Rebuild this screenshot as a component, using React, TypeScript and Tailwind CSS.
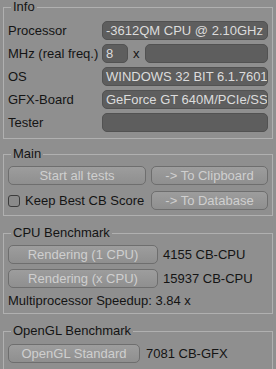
import React from 'react';

const font = { fontFamily: '"Liberation Sans", Arial, sans-serif' };

function Group({ title, className, children }: { title: string; className?: string; children: React.ReactNode }) {
  return (
    <fieldset className={`min-w-0 w-[270px] border border-[#b0b0b0] px-[4px] ${className ?? ''}`}>
      <legend className="ml-[3px] px-[2px] text-[13px] leading-[14px] text-[#141414]">{title}</legend>
      {children}
    </fieldset>
  );
}

function Field({ value, className }: { value?: string; className?: string }) {
  return (
    <div
      className={`min-w-0 h-[19px] rounded-[5px] border border-[#525252] bg-[#5e5e5e] px-[3px] text-[13px] leading-[17px] text-[#dcdcdc] whitespace-nowrap overflow-hidden ${className ?? ''}`}
    >
      {value}
    </div>
  );
}

function Btn({ label, className }: { label: string; className?: string }) {
  return (
    <button
      className={`h-[19px] rounded-[5px] border border-[#6e6e6e] bg-gradient-to-b from-[#9d9d9d] to-[#8f8f8f] text-[13px] leading-[17px] text-[#cfcfcf] text-center whitespace-nowrap ${className ?? ''}`}
    >
      {label}
    </button>
  );
}

const rows: [string, string][] = [
  ['Processor', '-3612QM CPU @ 2.10GHz'],
  ['MHz (real freq.)', ''],
  ['OS', 'WINDOWS 32 BIT 6.1.7601'],
  ['GFX-Board', 'GeForce GT 640M/PCIe/SSE2'],
  ['Tester', ''],
];

export default function App() {
  return (
    <div className="w-[276px] h-[369px] bg-[#8f8f8f] overflow-hidden px-[3px] text-[#141414]" style={font}>
      <Group title="Info" className="pt-[7px] pb-[6px]">
        <div className="flex flex-col gap-[4px]">
          {rows.map(([label, value]) => (
            <div key={label} className="flex items-center h-[19px] min-w-0">
              <span className="w-[94px] shrink-0 text-[13px] whitespace-nowrap">{label}</span>
              {label === 'MHz (real freq.)' ? (
                <div className="flex items-center flex-1 min-w-0">
                  <Field value="8" className="w-[26px] shrink-0" />
                  <span className="w-[17px] shrink-0 pl-[5px] text-[13px]">x</span>
                  <Field className="flex-1" />
                </div>
              ) : (
                <Field value={value} className="flex-1" />
              )}
            </div>
          ))}
        </div>
      </Group>

      <Group title="Main" className="mt-[8px] pt-[5px] pb-[5px]">
        <div className="grid grid-cols-[138px_1fr] gap-x-[5px] gap-y-[6px]">
          <Btn label="Start all tests" />
          <Btn label="-> To Clipboard" />
          <div className="flex items-center gap-[5px] h-[19px]">
            <span className="w-[12px] h-[12px] rounded-[3px] border border-[#3c3c3c] bg-[#8a8a8a]" />
            <span className="text-[13px] whitespace-nowrap">Keep Best CB Score</span>
          </div>
          <Btn label="-> To Database" />
        </div>
      </Group>

      <Group title="CPU Benchmark" className="mt-[10px] pt-[5px] pb-[4px]">
        <div className="flex flex-col gap-[4px]">
          <div className="flex items-center gap-[5px]">
            <Btn label="Rendering (1 CPU)" className="w-[150px]" />
            <span className="text-[13px]">4155 CB-CPU</span>
          </div>
          <div className="flex items-center gap-[5px]">
            <Btn label="Rendering (x CPU)" className="w-[150px]" />
            <span className="text-[13px]">15937 CB-CPU</span>
          </div>
          <div className="h-[17px] text-[13px] leading-[17px]">Multiprocessor Speedup: 3.84 x</div>
        </div>
      </Group>

      <Group title="OpenGL Benchmark" className="mt-[10px] pt-[6px] pb-[5px]">
        <div className="flex items-center gap-[6px]">
          <Btn label="OpenGL Standard" className="w-[132px]" />
          <span className="text-[13px]">7081 CB-GFX</span>
        </div>
      </Group>
    </div>
  );
}
